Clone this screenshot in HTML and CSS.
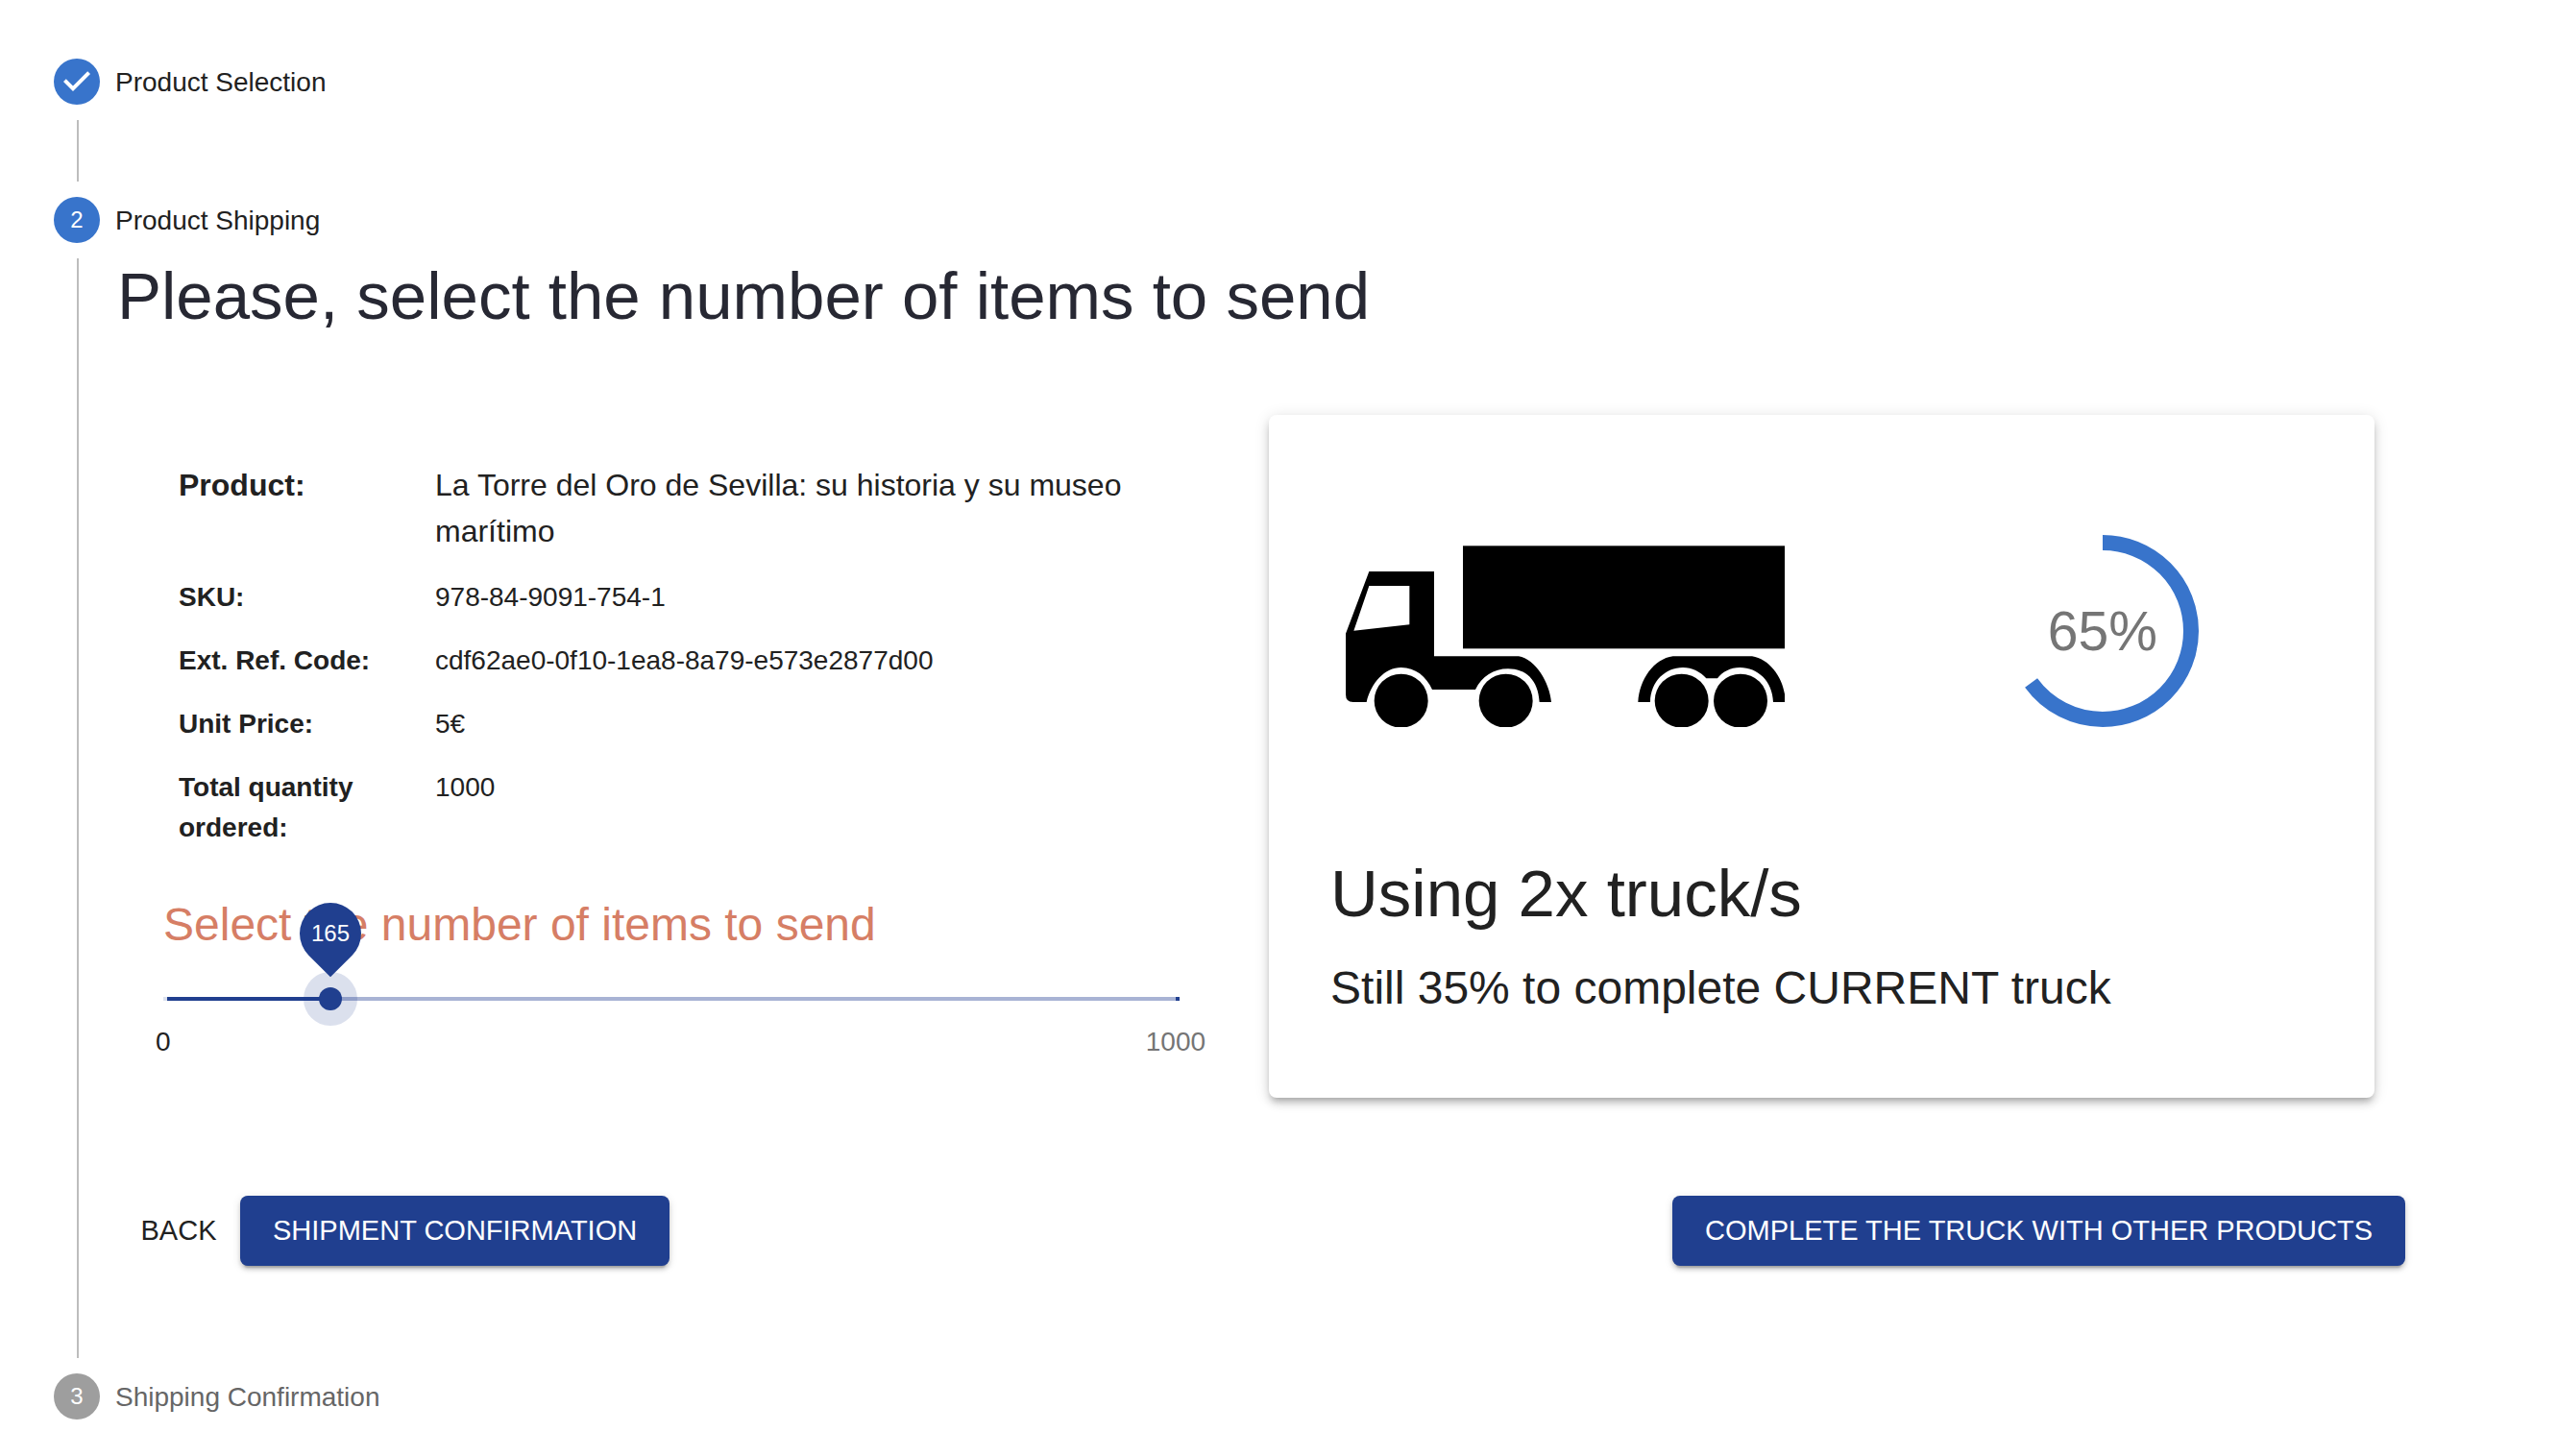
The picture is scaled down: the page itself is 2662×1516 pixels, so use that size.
FILE: index.html
```html
<!DOCTYPE html>
<html lang="en">
<head>
<meta charset="utf-8">
<title>Product Shipping</title>
<link rel="stylesheet" href="styles.css">
</head>
<body>
<main>
<ol class="stepper">
  <li class="step">
    <div class="step-header">
      <svg class="step-icon" viewBox="0 0 24 24" aria-hidden="true"><circle cx="12" cy="12" r="12" fill="#3874cb"/><path d="M10 17l-5-5 1.4-1.4 3.6 3.6 7.6-7.6L19 8z" fill="#fff"/></svg>
      <span>Product Selection</span>
    </div>
    <div class="step-body step-body-empty"></div>
  </li>
  <li class="step" aria-current="step">
    <div class="step-header">
      <span class="step-icon step-number">2</span>
      <span>Product Shipping</span>
    </div>
    <div class="step-body">
      <h1 class="title">Please, select the number of items to send</h1>
      <div class="columns">
        <section class="details">
          <dl class="product">
            <dt class="product-name">Product:</dt>
            <dd class="product-name">La Torre del Oro de Sevilla: su historia y su museo marítimo</dd>
            <dt>SKU:</dt>
            <dd>978-84-9091-754-1</dd>
            <dt>Ext. Ref. Code:</dt>
            <dd>cdf62ae0-0f10-1ea8-8a79-e573e2877d00</dd>
            <dt>Unit Price:</dt>
            <dd>5€</dd>
            <dt>Total quantity ordered:</dt>
            <dd>1000</dd>
          </dl>
          <label class="slider-label" for="items">Select the number of items to send</label>
          <div class="slider">
            <input class="slider-input" id="items" type="range" min="0" max="1000" value="165">
            <output class="slider-pin" for="items" style="left:16.5%"><span>165</span></output>
          </div>
          <div class="slider-scale"><span class="scale-min">0</span><span class="scale-max">1000</span></div>
        </section>
        <section class="card">
          <div class="card-visual">
            <svg class="truck" viewBox="63 81 1371 567" role="img" aria-label="Truck">
              <path fill-rule="evenodd" d="M136 162H339V427H603C655 435 700 510 705 570H668C664 500 625 466 570 466C525 466 488 490 468 531H333C315 490 280 462 236 462C185 462 142 510 128 570H86Q63 570 63 546V356ZM136 207L88 347Q175 338 262 328V207Z"/>
              <rect x="429" y="82" width="1005" height="321"/>
              <path d="M976 570C980 500 1025 435 1085 427H1332C1385 435 1425 490 1434 545V570H1398C1396 505 1350 462 1294 462C1265 462 1238 476 1224 496H1189C1170 475 1145 462 1116 462C1062 462 1015 505 1014 570Z"/>
              <circle cx="236" cy="566" r="84"/><circle cx="563" cy="566" r="84"/><circle cx="1112" cy="566" r="84"/><circle cx="1296" cy="566" r="84"/>
            </svg>
            <div class="progress" role="progressbar" aria-valuenow="65" aria-valuemin="0" aria-valuemax="100" aria-label="Truck load">
              <svg class="progress-ring" viewBox="0 0 200 200" aria-hidden="true"><circle cx="100" cy="100" r="92" pathLength="100" stroke-dasharray="65 100" transform="rotate(-90 100 100)" fill="none" stroke="#3874cb" stroke-width="16"/></svg>
              <span class="progress-value">65%</span>
            </div>
          </div>
          <h2 class="card-title">Using 2x truck/s</h2>
          <p class="card-text">Still 35% to complete CURRENT truck</p>
        </section>
      </div>
      <div class="actions">
        <button class="button button-text" type="button">BACK</button>
        <button class="button button-filled" type="button">SHIPMENT CONFIRMATION</button>
        <button class="button button-filled button-end" type="button">COMPLETE THE TRUCK WITH OTHER PRODUCTS</button>
      </div>
    </div>
  </li>
  <li class="step">
    <div class="step-header step-header-pending">
      <span class="step-icon step-number">3</span>
      <span>Shipping Confirmation</span>
    </div>
  </li>
</ol>
</main>
</body>
</html>
```
FILE: styles.css
```css
* {
  box-sizing: border-box;
}

body {
  margin: 0;
  background: #fff;
  color: #212121;
  font-family: "Liberation Sans", Arial, Helvetica, sans-serif;
  font-size: 28px;
  line-height: 42px;
}

h1, h2, p, dl, dd, ol {
  margin: 0;
  padding: 0;
}

.stepper {
  list-style: none;
  padding: 61px 72px 38px 56px;
}

.step-header {
  display: flex;
  gap: 16px;
  height: 48px;
  line-height: 50px;
}

.step-icon {
  width: 48px;
  height: 48px;
  flex: none;
}

.step-number {
  border-radius: 50%;
  background: #3874cb;
  color: #fff;
  font-size: 24px;
  line-height: 48px;
  text-align: center;
}

.step-header-pending {
  color: #666;
}

.step-header-pending .step-number {
  background: #9e9e9e;
}

.step-body {
  margin: 16px 0 16px 24px;
  padding: 0 0 96px 40px;
  border-left: 2px solid #bdbdbd;
}

.step-body-empty {
  padding: 64px 0 0;
}

.title {
  color: #272833;
  font-size: 69px;
  font-weight: 400;
  line-height: 80px;
}

.columns {
  display: grid;
  grid-template-columns: 11fr 12fr;
  gap: 96px;
  margin: 83px 118px 0 48px;
}

.details {
  padding-top: 49px;
}

.product {
  display: grid;
  grid-template-columns: 240px 1fr;
  gap: 24px 27px;
  padding-left: 16px;
}

dt {
  font-weight: 700;
}

.product-name {
  font-size: 32px;
  line-height: 48px;
}

.slider-label {
  display: block;
  margin-top: 48px;
  color: #d67e65;
  font-size: 48px;
  line-height: 64px;
}

.slider {
  position: relative;
  height: 56px;
  margin-top: 17px;
}

.slider-input {
  display: block;
  appearance: none;
  width: calc(100% + 24px);
  height: 56px;
  margin: 0 -12px;
  background:
    linear-gradient(#203f8f, #203f8f) calc(100% - 9px) 50% / 4px 4px,
    linear-gradient(#dbe1ee, #dbe1ee) 12px 50% / 4px 4px,
    linear-gradient(90deg, #203f8f 16.5%, #a8b3d4 16.5%) 12px 50% / calc(100% - 24px) 4px;
  background-repeat: no-repeat;
}

.slider-input::-webkit-slider-thumb {
  appearance: none;
  width: 24px;
  height: 24px;
  border-radius: 50%;
  background: #203f8f;
  box-shadow: 0 0 0 16px rgba(32, 63, 143, 0.16);
}

.slider-pin {
  position: absolute;
  top: -72px;
  width: 64px;
  height: 64px;
  margin-left: -32px;
  border-radius: 50% 50% 50% 0;
  background: #203f8f;
  color: #fff;
  font-size: 24px;
  line-height: 64px;
  text-align: center;
  transform: rotate(-45deg);
}

.slider-pin span {
  display: block;
  transform: rotate(45deg);
}

.slider-scale {
  display: flex;
  justify-content: space-between;
  margin: -4px -30px 0 -8px;
}

.scale-max {
  color: #757575;
}

.card {
  padding: 125px 64px 82px;
  border-radius: 8px;
  background: #fff;
  box-shadow:
    0 6px 6px -4px rgba(0, 0, 0, 0.2),
    0 6px 8px 0 rgba(0, 0, 0, 0.14),
    0 2px 16px 0 rgba(0, 0, 0, 0.12);
}

.card-visual {
  display: grid;
  grid-template-columns: 4fr 3fr;
  align-items: end;
  margin-bottom: 132px;
}

.truck {
  width: 457px;
  height: 189px;
  margin-left: 16px;
}

.progress {
  display: grid;
  place-items: center;
}

.progress-ring {
  grid-area: 1 / 1;
  width: 200px;
  height: 200px;
}

.progress-value {
  grid-area: 1 / 1;
  color: #757575;
  font-size: 57px;
}

.card-title {
  font-size: 69px;
  font-weight: 400;
  line-height: 84px;
}

.card-text {
  margin-top: 24px;
  font-size: 48px;
  line-height: 64px;
}

.actions {
  display: flex;
  margin: 102px 86px 0 0;
}

.button {
  padding: 12px 34px;
  border: 0;
  border-radius: 8px;
  background: none;
  color: inherit;
  font-family: inherit;
  font-size: 29px;
  line-height: 49px;
}

.button-text {
  width: 128px;
  padding: 12px 16px;
}

.button-filled {
  background: #203f8f;
  color: #fff;
  box-shadow:
    0 6px 2px -4px rgba(0, 0, 0, 0.2),
    0 4px 4px 0 rgba(0, 0, 0, 0.14),
    0 2px 10px 0 rgba(0, 0, 0, 0.12);
}

.button-end {
  margin-left: auto;
}
```
